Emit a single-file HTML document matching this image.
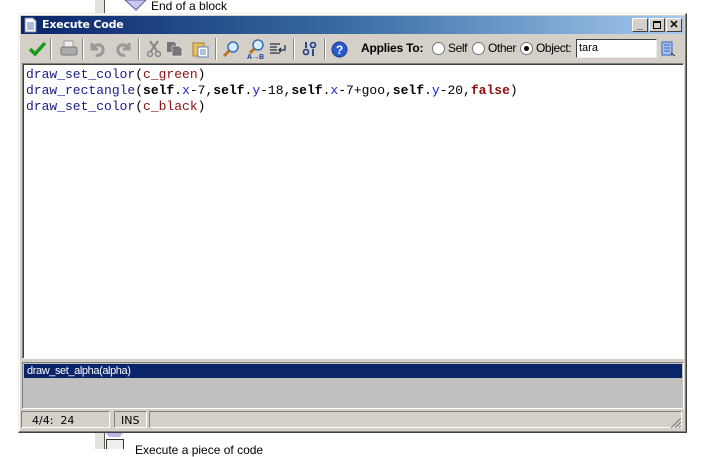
<!DOCTYPE html>
<html><head><style>
body{margin:0;width:701px;height:449px;background:#fff;position:relative;overflow:hidden;font-family:Tahoma,"DejaVu Sans",sans-serif;font-size:11px}
.a{position:absolute}
.code{font-family:"Liberation Mono",monospace;font-size:13px;line-height:16px;white-space:pre;color:#000}
.f{color:#1a1a8c}.c{color:#8b1010}.k{font-weight:bold}.v{color:#2020e0}
.sep{position:absolute;top:38px;width:1px;height:22px;background:#888;border-right:1px solid #fff}
.rad{position:absolute;top:42px;width:11px;height:11px;border-radius:50%;background:#fff;border:1px solid #777}
.lb{position:absolute;top:41px;font-family:'Liberation Sans';font-size:12px;letter-spacing:-0.4px}
</style></head><body>
<div class="a" style="left:95px;top:0;width:9px;height:449px;background:#e4e2dc"></div>
<div class="a" style="left:104px;top:0;width:1px;height:449px;background:#555"></div>
<svg class="a" style="left:124px;top:0" width="24" height="12"><path d="M1 0 L22 0 L12 10 Z" fill="#c8c8f0" stroke="#6060a0"/></svg>
<div class="a" style="left:151px;top:-1px;font-size:12px;font-family:'Liberation Sans',sans-serif">End of a block</div>
<svg class="a" style="left:105px;top:433px" width="20" height="16"><path d="M1 0 L18 0 L15 4 L4 4Z" fill="#b8b8e8"/><rect x="1.5" y="6.5" width="17" height="12" fill="#eee" stroke="#333"/></svg>
<div class="a" style="left:135px;top:443px;font-size:12px;font-family:'Liberation Sans',sans-serif">Execute a piece of code</div>
<div class="a" style="left:18px;top:13px;width:667px;height:418px;background:#d4d0c8;border:1px solid;border-color:#eee #404040 #404040 #eee;box-shadow:inset -1px -1px #808080,inset 1px 1px #fff"></div>
<div class="a" style="left:21px;top:16px;width:663px;height:18px;background:linear-gradient(90deg,#0a246a 0%,#3a6ea5 50%,#a6caf0 100%)"></div>
<svg class="a" style="left:24px;top:17px" width="14" height="16"><path d="M1 1 H9 L12 4 V15 H1 Z" fill="#fff" stroke="#7080b0"/><path d="M3 6H10M3 8H10M3 10H10M3 12H10" stroke="#5070c0"/></svg>
<div class="a" style="left:42px;top:18px;color:#fff;font-weight:bold;font-size:11px;font-family:'DejaVu Sans',sans-serif;letter-spacing:-0.2px">Execute Code</div>
<div class="a" style="left:632px;top:18px;width:50px;height:14px">
<div class="a" style="left:0;top:0;width:14px;height:12px;background:#d4d0c8;border:1px solid;border-color:#fff #404040 #404040 #fff;font:bold 10px 'Liberation Sans';text-align:center;line-height:14px">_</div>
<div class="a" style="left:17px;top:0;width:14px;height:12px;background:#d4d0c8;border:1px solid;border-color:#fff #404040 #404040 #fff"><div class="a" style="left:3px;top:2px;width:6px;height:5px;border:1px solid #000;border-top-width:2px"></div></div>
<div class="a" style="left:34px;top:0;width:14px;height:12px;background:#d4d0c8;border:1px solid;border-color:#fff #404040 #404040 #fff;font:bold 11px 'Liberation Sans';text-align:center;line-height:12px">✕</div>
</div>
<svg class="a" style="left:28px;top:40px" width="20" height="18"><path d="M2 9 L7 14 L17 3" stroke="#1a9a1a" stroke-width="3.5" fill="none"/></svg>
<div class="sep" style="left:50px"></div>
<svg class="a" style="left:60px;top:40px" width="18" height="18"><rect x="4" y="1" width="9" height="6" fill="#eee" stroke="#999"/><rect x="1" y="7" width="16" height="8" rx="2" fill="#aaa" stroke="#777"/></svg>
<div class="sep" style="left:82px"></div>
<svg class="a" style="left:89px;top:40px" width="18" height="18"><path d="M3 3 V9 H9" stroke="#999" stroke-width="3" fill="none"/><path d="M4 8 C7 3 15 4 14 11 C13 15 9 16 7 15" stroke="#999" stroke-width="3" fill="none"/></svg>
<svg class="a" style="left:114px;top:40px" width="18" height="18"><path d="M15 3 V9 H9" stroke="#999" stroke-width="3" fill="none"/><path d="M14 8 C11 3 3 4 4 11 C5 15 9 16 11 15" stroke="#999" stroke-width="3" fill="none"/></svg>
<div class="sep" style="left:138px"></div>
<svg class="a" style="left:146px;top:40px" width="16" height="18"><path d="M4 1 L11 11 M12 1 L5 11" stroke="#888" stroke-width="2"/><circle cx="4" cy="14" r="2.5" fill="none" stroke="#888" stroke-width="1.5"/><circle cx="12" cy="14" r="2.5" fill="none" stroke="#888" stroke-width="1.5"/></svg>
<svg class="a" style="left:166px;top:40px" width="18" height="18"><path d="M1 2 H8 L10 4 V12 H1Z" fill="#777"/><path d="M6 6 H13 L16 9 V16 H6Z" fill="#777" stroke="#fff" stroke-width=".5"/></svg>
<svg class="a" style="left:192px;top:40px" width="18" height="18"><rect x="1" y="3" width="11" height="13" fill="#e8c060" stroke="#a08030"/><rect x="6" y="7" width="10" height="10" fill="#fff" stroke="#6080c0"/><path d="M8 10H14M8 12H14M8 14H14" stroke="#6080c0"/></svg>
<div class="sep" style="left:215px"></div>
<svg class="a" style="left:222px;top:40px" width="18" height="18"><circle cx="11" cy="7" r="5" fill="#d8ecff" stroke="#3a70b0" stroke-width="1.5"/><path d="M7 11 L2 16" stroke="#c07020" stroke-width="3"/></svg>
<svg class="a" style="left:246px;top:38px" width="22" height="22"><circle cx="12" cy="7" r="5" fill="#d8ecff" stroke="#3a70b0" stroke-width="1.5"/><path d="M8 11 L4 15" stroke="#c07020" stroke-width="3"/><text x="1" y="21" font-size="7" font-weight="bold" fill="#1a3a9a" font-family="Liberation Sans">A→B</text></svg>
<svg class="a" style="left:269px;top:40px" width="18" height="18"><path d="M1 4H11M1 7H8M1 10H8M1 13H11" stroke="#234" stroke-width="1.2"/><path d="M16 5 V10 H10 M12 8 L10 10 L12 12" stroke="#234" stroke-width="1.3" fill="none"/></svg>
<div class="sep" style="left:293px"></div>
<svg class="a" style="left:302px;top:40px" width="16" height="18"><circle cx="4" cy="12" r="2.5" fill="none" stroke="#1a3a8a" stroke-width="1.6"/><path d="M4 2V8" stroke="#1a3a8a" stroke-width="1.8"/><circle cx="11" cy="5" r="2.5" fill="none" stroke="#1a3a8a" stroke-width="1.6"/><path d="M11 9V16" stroke="#1a3a8a" stroke-width="1.8"/></svg>
<div class="sep" style="left:324px"></div>
<svg class="a" style="left:331px;top:41px" width="17" height="17"><circle cx="8.5" cy="8.5" r="7.5" fill="#2a5ad0" stroke="#1a3a8a"/><text x="8.5" y="13" text-anchor="middle" font-size="12" font-weight="bold" fill="#fff" font-family="Liberation Sans">?</text></svg>
<div class="lb" style="left:361px;font-weight:bold;font-size:12px;letter-spacing:-0.2px">Applies To:</div>
<div class="rad" style="left:432px"></div>
<div class="lb" style="left:448px">Self</div>
<div class="rad" style="left:472px"></div>
<div class="lb" style="left:488px">Other</div>
<div class="rad" style="left:520px"><div class="a" style="left:3px;top:3px;width:5px;height:5px;border-radius:50%;background:#000"></div></div>
<div class="lb" style="left:536px">Object:</div>
<div class="a" style="left:576px;top:39px;width:77px;height:17px;background:#fff;border:1px solid;border-color:#404040 #eee #eee #404040;font-family:'Liberation Sans';font-size:11px;line-height:17px;padding-left:2px">tara</div>
<svg class="a" style="left:660px;top:40px" width="16" height="18"><rect x="2" y="2" width="10" height="13" fill="#a8c4f0" stroke="#3a60b0"/><path d="M4 5H10M4 8H10M4 11H10" stroke="#3a60b0"/><path d="M11 13L15 16" stroke="#333"/></svg>
<div class="a" style="left:22px;top:63px;width:660px;height:294px;background:#fff;border:1px solid;border-color:#808080 #fff #fff #808080;box-shadow:inset 1px 1px #404040"></div>
<div class="a code" style="left:26px;top:67px"><span class="f">draw_set_color</span>(<span class="c">c_green</span>)
<span class="f">draw_rectangle</span>(<span class="k">self</span>.<span class="v">x</span>-7,<span class="k">self</span>.<span class="v">y</span>-18,<span class="k">self</span>.<span class="v">x</span>-7+goo,<span class="k">self</span>.<span class="v">y</span>-20,<span class="c k">false</span>)
<span class="f">draw_set_color</span>(<span class="c">c_black</span>)</div>
<div class="a" style="left:22px;top:362px;width:660px;height:45px;background:#c0c0c0;border:1px solid;border-color:#808080 #fff #fff #808080"></div>
<div class="a" style="left:24px;top:364px;width:658px;height:14px;background:#0a246a;color:#fff;font-family:'Liberation Sans';font-size:11px;line-height:14px;padding-left:3px;letter-spacing:-0.4px;box-sizing:border-box">draw_set_alpha(alpha)</div>
<div class="a" style="left:21px;top:411px;width:89px;height:17px;border:1px solid;border-color:#808080 #fff #fff #808080;font-size:11px;line-height:17px;padding-left:10px;box-sizing:border-box;font-family:'DejaVu Sans'">4/4:&nbsp; 24</div>
<div class="a" style="left:114px;top:411px;width:33px;height:17px;border:1px solid;border-color:#808080 #fff #fff #808080;font-size:11px;line-height:17px;padding-left:6px;box-sizing:border-box;font-family:'DejaVu Sans'">INS</div>
<div class="a" style="left:149px;top:411px;width:533px;height:17px;border:1px solid;border-color:#808080 #fff #fff #808080;box-sizing:border-box"></div>
<svg class="a" style="left:670px;top:417px" width="12" height="12"><path d="M11 1L1 11M11 5L5 11M11 9L9 11" stroke="#808080" stroke-width="1.2"/></svg>
</body></html>
